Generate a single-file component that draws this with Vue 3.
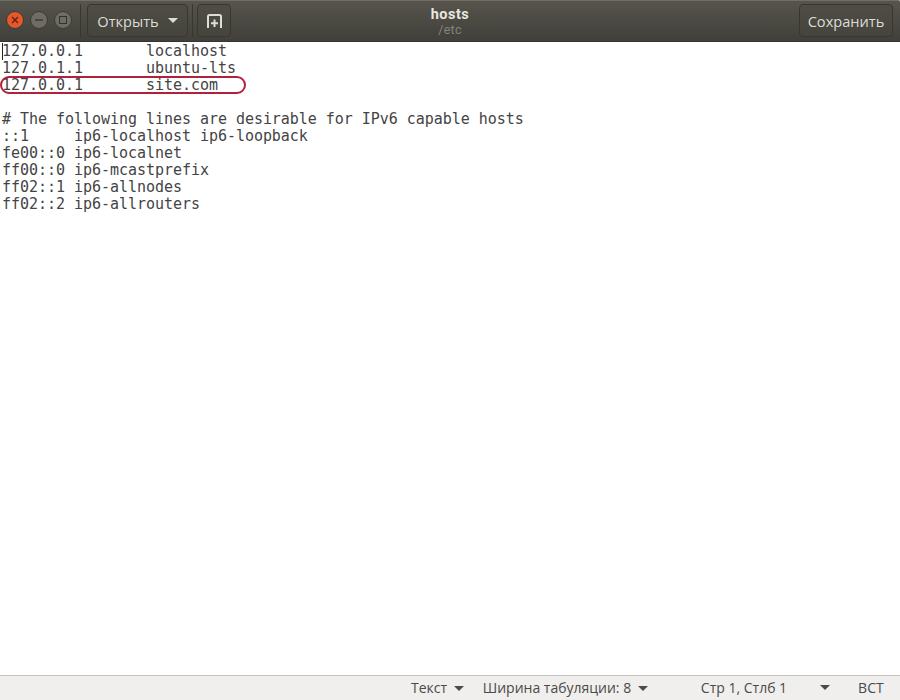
<script setup>
const lines = [
  '127.0.0.1\tlocalhost',
  '127.0.1.1\tubuntu-lts',
  '127.0.0.1\tsite.com',
  '',
  '# The following lines are desirable for IPv6 capable hosts',
  '::1     ip6-localhost ip6-loopback',
  'fe00::0 ip6-localnet',
  'ff00::0 ip6-mcastprefix',
  'ff02::1 ip6-allnodes',
  'ff02::2 ip6-allrouters',
]
</script>

<template>
  <div class="window">
    <header class="bar">
      <div class="controls">
        <span class="ctl close">
          <svg width="8" height="8" viewBox="0 0 8 8"><path d="M1 1l6 6M7 1l-6 6" stroke="#6b220e" stroke-width="1.5" fill="none"/></svg>
        </span>
        <span class="ctl">
          <svg width="10" height="8" viewBox="0 0 10 8"><path d="M1 4h8" stroke="#33322d" stroke-width="1.3" fill="none"/></svg>
        </span>
        <span class="ctl">
          <svg width="10" height="10" viewBox="0 0 10 10"><rect x="1.5" y="1.5" width="7" height="7" stroke="#33322d" fill="none"/></svg>
        </span>
      </div>
      <span class="sep first"></span>
      <button class="btn open">
        <span>Открыть</span>
        <i class="arrow light"></i>
      </button>
      <span class="sep second"></span>
      <button class="btn newtab">
        <svg width="17" height="16" viewBox="0 0 17 16"><path d="M2 15V3.500q0-1.500 1.500-1.500h10q1.500 0 1.500 1.500V15M8.500 6.500V14M5 10.200h7" stroke="#dedcd6" stroke-width="2" fill="none"/></svg>
      </button>
      <div class="title">
        <div class="name">hosts</div>
        <div class="path">/etc</div>
      </div>
      <button class="btn save">Сохранить</button>
    </header>

    <main class="editor">
      <span class="cursor"></span>
      <span class="mark"></span>
      <div v-for="(line, i) in lines" :key="i" class="line">{{ line }}</div>
    </main>

    <footer class="status">
      <span class="item lang">Текст <i class="arrow"></i></span>
      <span class="item tabs">Ширина табуляции: 8 <i class="arrow"></i></span>
      <span class="item pos">Стр 1, Стлб 1</span>
      <i class="arrow solo"></i>
      <span class="item ins">ВСТ</span>
    </footer>
  </div>
</template>

<style>
html, body { margin: 0; background: #fff; }
</style>

<style scoped>
.window {
  width: 900px;
  height: 700px;
  display: flex;
  flex-direction: column;
  overflow: hidden;
  font-family: "Open Sans", "Noto Sans", sans-serif;
}
.bar {
  height: 42px;
  flex: none;
  position: relative;
  display: flex;
  align-items: center;
  background: linear-gradient(#57554c, #403f3a);
  box-shadow: inset 0 1px 0 #716f65;
  border-bottom: 1px solid #35342f;
  border-top-right-radius: 2px;
  padding: 0 7px 0 6px;
  box-sizing: border-box;
}
.controls { display: flex; gap: 6px; width: 74px; flex: none; margin-top: -1px; }
.ctl {
  width: 18px;
  height: 18px;
  border-radius: 50%;
  background: #6e6c63;
  border: 1px solid #3a3934;
  box-sizing: border-box;
  display: flex;
  align-items: center;
  justify-content: center;
}
.close { background: #e5582c; }
.sep {
  width: 1px;
  height: 33px;
  flex: none;
  background: #37362f;
}
.first { margin-right: 6px; }
.second { margin: 0 4px; }
.btn {
  height: 33px;
  box-sizing: border-box;
  border: 1px solid #38372f;
  border-radius: 4px;
  background: linear-gradient(#4f4d45, #45443d);
  color: #dedcd6;
  font: 14.6px "Open Sans", "Noto Sans", sans-serif;
  display: flex;
  align-items: center;
  justify-content: center;
  padding: 0;
}
.open { width: 101px; gap: 9px; }
.newtab { width: 34px; }
.save { width: 94px; margin-left: auto; }
.title {
  position: absolute;
  left: 0;
  right: 0;
  top: 7px;
  text-align: center;
  pointer-events: none;
}
.name { color: #e8e6e0; font: 700 14.5px/16px Roboto, "Open Sans", sans-serif; letter-spacing: 0.5px; }
.path { color: #85837a; font: 12.5px/14px Roboto, "Open Sans", sans-serif; letter-spacing: 0.3px; }
.arrow {
  display: inline-block;
  width: 0;
  height: 0;
  border-left: 5px solid transparent;
  border-right: 5px solid transparent;
  border-top: 5px solid #4a4a4a;
  vertical-align: 2px;
  margin-left: 3px;
}
.arrow.light { border-top-color: #dedcd6; margin-left: 0; }
.editor {
  flex: 1;
  position: relative;
  background: #fff;
  padding: 1px 0 0 2px;
  font-family: "DejaVu Sans Mono", monospace;
  font-size: 15px;
  line-height: 17px;
  letter-spacing: -0.035px;
  color: #444;
}
.line { height: 17px; white-space: pre; tab-size: 8; }
.cursor {
  position: absolute;
  left: 2px;
  top: 1px;
  width: 1px;
  height: 17px;
  background: #222;
}
.mark {
  position: absolute;
  left: 0;
  top: 34px;
  width: 246px;
  height: 18px;
  box-sizing: border-box;
  border: 2px solid #b3203c;
  border-radius: 9px;
}
.status {
  height: 25px;
  flex: none;
  display: flex;
  align-items: center;
  box-sizing: border-box;
  border-top: 1px solid #c4c2bd;
  background: #f0efed;
  color: #4a4a4a;
  font-size: 14px;
  padding-left: 411px;
  padding-bottom: 2px;
  white-space: nowrap;
}
.tabs { margin-left: 19px; }
.pos { margin-left: 53px; }
.solo { margin-left: 33px; }
.ins { margin-left: 28px; }
</style>
